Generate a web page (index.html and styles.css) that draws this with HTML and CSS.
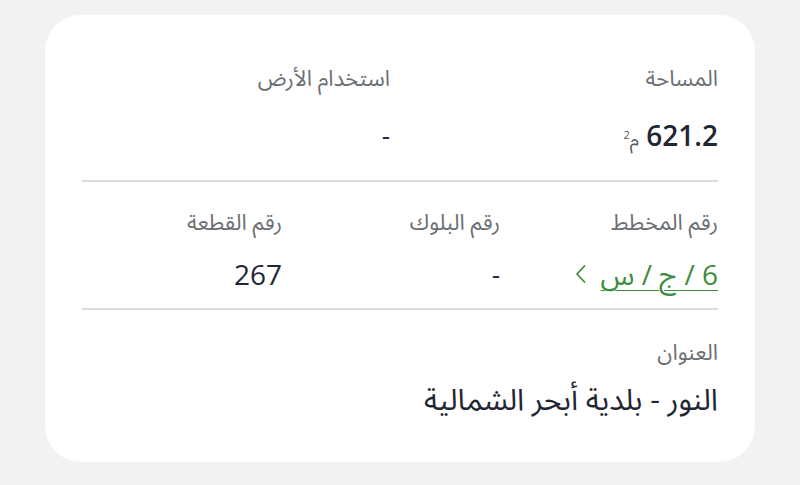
FILE: index.html
```html
<!DOCTYPE html>
<html lang="ar" dir="rtl">
<head>
<meta charset="utf-8">
<link rel="stylesheet" href="styles.css">
</head>
<body>
<div class="card">
  <div class="section grid2 s1">
    <div class="field">
      <div class="label">المساحة</div>
      <div class="value num strong">621.2 <span class="unit">م<sup>2</sup></span></div>
    </div>
    <div class="field">
      <div class="label">استخدام الأرض</div>
      <div class="value">-</div>
    </div>
  </div>
  <div class="divider"></div>
  <div class="section grid3 s2">
    <div class="field">
      <div class="label">رقم المخطط</div>
      <div class="value link-row">
        <a class="link" href="#">6 / ج / س</a>
        <svg class="chev" width="12" height="22" viewBox="0 0 12 22"><path d="M9.5 3 L2 11 L9.5 19" fill="none" stroke="#3e8c3e" stroke-width="1.8" stroke-linecap="round" stroke-linejoin="round"/></svg>
      </div>
    </div>
    <div class="field">
      <div class="label">رقم البلوك</div>
      <div class="value">-</div>
    </div>
    <div class="field">
      <div class="label">رقم القطعة</div>
      <div class="value num">267</div>
    </div>
  </div>
  <div class="divider"></div>
  <div class="section s3">
    <div class="label">العنوان</div>
    <div class="value addr">النور - بلدية أبحر الشمالية</div>
  </div>
</div>
</body>
</html>
```

FILE: styles.css
```css
html, body {
  margin: 0;
  padding: 0;
}
body {
  background: #f2f2f2;
  font-family: "Open Sans", "Noto Sans Arabic", "DejaVu Sans", sans-serif;
  width: 800px;
  height: 485px;
  overflow: hidden;
}
.card {
  margin: 15px 45px 0 45px;
  height: 447px;
  box-sizing: border-box;
  background: #ffffff;
  border-radius: 36px;
  padding: 50px 37px 0 37px;
}
.grid2 {
  display: grid;
  grid-template-columns: 1fr 1fr;
  column-gap: 20px;
}
.grid3 {
  display: grid;
  grid-template-columns: 1fr 1fr 1fr;
  column-gap: 18px;
}
.label {
  font-size: 22px;
  line-height: 24px;
  color: #6b6f74;
}
.value {
  font-size: 26px;
  line-height: 34px;
  color: #1f2733;
}
.num {
  font-size: 28px;
}
.strong {
  font-weight: 600;
}
.unit {
  font-size: 19px;
  color: #555a60;
  font-weight: 400;
}
.unit sup {
  font-size: 11px;
}
.s1 .value {
  margin-top: 29px;
}
.s1 {
  padding-bottom: 24px;
}
.divider {
  height: 2px;
  background: #dedede;
}
.s2 {
  padding-top: 27px;
  padding-bottom: 17px;
}
.s2 .value {
  margin-top: 24px;
}
.link-row {
  display: flex;
  align-items: center;
  gap: 14px;
}
.link {
  font-size: 28px;
  color: #3e8c3e;
  text-decoration: underline;
  text-decoration-thickness: 1px;
  text-underline-offset: 5px;
}
.chev {
  display: block;
}
.s3 {
  padding-top: 29px;
}
.s3 .value {
  margin-top: 19px;
}
.addr {
  font-size: 30px;
}
```
